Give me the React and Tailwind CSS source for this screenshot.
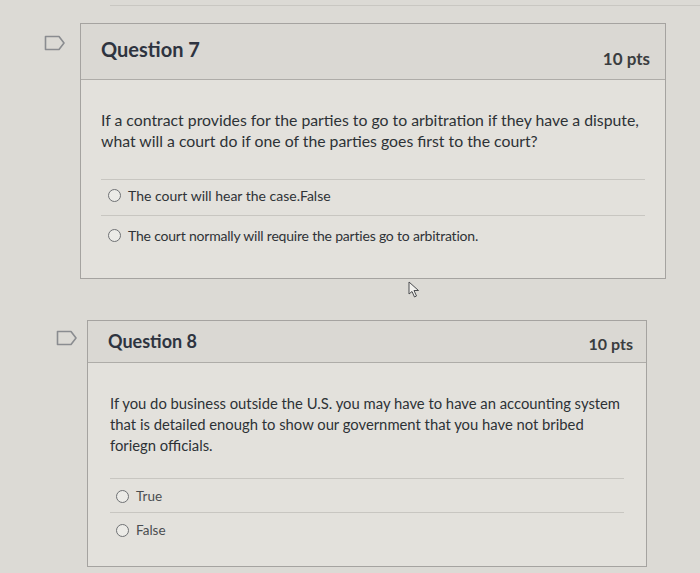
import React from 'react'

const Flag = () => (
  <svg width="22" height="16" viewBox="0 0 22 16" className="shrink-0">
    <path d="M1.5 1.5 H15 L20 8 L15 14.5 H1.5 Z" fill="none" stroke="#8a8c90" strokeWidth="1.6" strokeLinejoin="round" />
  </svg>
)

const Radio = ({ label }) => (
  <div className="flex items-center gap-[7px]">
    <span className="w-[13px] h-[13px] rounded-full border border-[#6f7174] bg-[#ecebe7] shrink-0" />
    <span>{label}</span>
  </div>
)

const App = () => {
  return (
    <div
      className="w-[700px] h-[573px] bg-[#dcdad5] relative overflow-hidden text-[#2f3337]"
      style={{ fontFamily: 'Lato, "Open Sans", sans-serif' }}
    >
      <div className="h-[6px] border-b border-[#c9c7c2] ml-[110px]" />

      {/* QUESTION 7 */}
      <div className="flex items-start mt-[17px]">
        <div className="w-[80px] pl-[44px] pt-[12px]">
          <Flag />
        </div>
        <div className="w-[586px] border border-[#a5a3a0] bg-[#e3e1dc]">
          <div className="h-[56px] bg-[#dad8d3] border-b border-[#aeaca8] flex justify-between pl-[20px] pr-[15px]">
            <span className="text-[20px] font-bold pt-[10px] text-[#2e3440]">Question 7</span>
            <span className="text-[17px] font-bold pt-[22px] text-[#3a3d40]">10 pts</span>
          </div>
          <div className="px-[20px] pt-[29px] text-[15.8px] leading-[21px] text-[#2d3236]">
            If a contract provides for the parties to go to arbitration if they have a dispute,
            <br />
            what will a court do if one of the parties goes first to the court?
          </div>
          <div className="mx-[20px] mt-[28px] border-t border-[#c8c6c1]" />
          <div className="px-[27px] pt-[5px] pb-[7px] text-[14px]">
            <Radio label="The court will hear the case.False" />
          </div>
          <div className="mx-[20px] mt-[2px] border-t border-[#c8c6c1]" />
          <div className="px-[27px] pt-[9px] pb-[32px] text-[14px] tracking-[-0.2px]">
            <Radio label="The court normally will require the parties go to arbitration." />
          </div>
        </div>
      </div>

      {/* QUESTION 8 */}
      <div className="flex items-start mt-[41px]">
        <div className="w-[87px] pl-[56px] pt-[10px]">
          <Flag />
        </div>
        <div className="w-[560px] border border-[#a5a3a0] bg-[#e3e1dc]">
          <div className="h-[42px] bg-[#dad8d3] border-b border-[#aeaca8] flex justify-between pl-[20px] pr-[13px]">
            <span className="text-[18px] font-bold pt-[7px] text-[#2e3440]">Question 8</span>
            <span className="text-[16px] font-bold pt-[11px] text-[#3a3d40]">10 pts</span>
          </div>
          <div className="px-[22px] pt-[30px] text-[14.8px] leading-[21px] text-[#2d3236]">
            If you do business outside the U.S. you may have to have an accounting system
            <br />
            that is detailed enough to show our government that you have not bribed
            <br />
            foriegn officials.
          </div>
          <div className="mx-[22px] mt-[22px] border-t border-[#c8c6c1]" />
          <div className="px-[28px] pt-[7px] pb-[6px] text-[13.5px] text-[#4a4d50]">
            <Radio label="True" />
          </div>
          <div className="mx-[22px] border-t border-[#c8c6c1]" />
          <div className="px-[28px] pt-[7px] pb-[25px] text-[13.5px] text-[#4a4d50]">
            <Radio label="False" />
          </div>
        </div>
      </div>

      {/* cursor */}
      <svg className="absolute left-[408px] top-[281px]" width="14" height="18" viewBox="0 0 14 18">
        <path d="M1 1 L1 13 L4 10.5 L6.5 16 L8.5 15 L6 9.5 L10.5 9.5 Z" fill="#f2f1ee" stroke="#4a4c4f" strokeWidth="1" strokeLinejoin="round" />
      </svg>
    </div>
  )
}

export default App
